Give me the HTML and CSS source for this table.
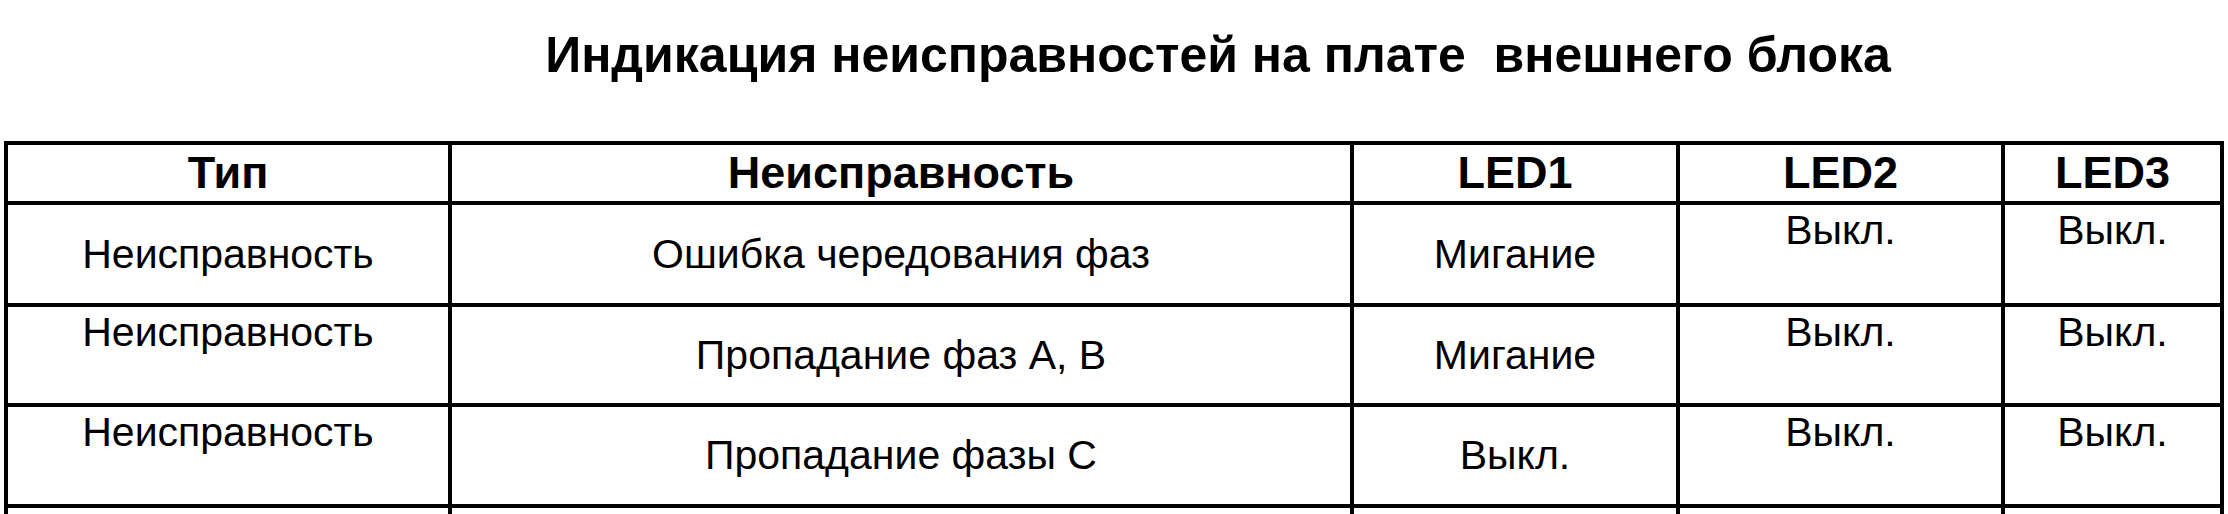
FILE: index.html
```html
<!DOCTYPE html>
<html lang="ru">
<head>
<meta charset="utf-8">
<title>Индикация неисправностей</title>
<link rel="stylesheet" href="styles.css">
</head>
<body>
<h1 class="title">Индикация неисправностей на плате&nbsp; внешнего блока</h1>
<table class="faults">
  <colgroup>
    <col class="col-type">
    <col class="col-fault">
    <col class="col-led1">
    <col class="col-led2">
    <col class="col-led3">
  </colgroup>
  <thead>
    <tr class="head-row">
      <th>Тип</th>
      <th>Неисправность</th>
      <th>LED1</th>
      <th>LED2</th>
      <th>LED3</th>
    </tr>
  </thead>
  <tbody>
    <tr class="row-1">
      <td class="mid">Неисправность</td>
      <td class="mid">Ошибка чередования фаз</td>
      <td class="mid">Мигание</td>
      <td class="top">Выкл.</td>
      <td class="top">Выкл.</td>
    </tr>
    <tr class="row-2">
      <td class="top">Неисправность</td>
      <td class="mid">Пропадание фаз А, В</td>
      <td class="mid">Мигание</td>
      <td class="top">Выкл.</td>
      <td class="top">Выкл.</td>
    </tr>
    <tr class="row-3">
      <td class="top">Неисправность</td>
      <td class="mid">Пропадание фазы С</td>
      <td class="mid">Выкл.</td>
      <td class="top">Выкл.</td>
      <td class="top">Выкл.</td>
    </tr>
    <tr class="row-4">
      <td class="top"></td>
      <td class="mid"></td>
      <td class="mid"></td>
      <td class="top"></td>
      <td class="top"></td>
    </tr>
  </tbody>
</table>
</body>
</html>
```

FILE: styles.css
```css
html, body {
  margin: 0;
  padding: 0;
  background: #ffffff;
}

body {
  width: 2228px;
  font-family: "Liberation Sans", Arial, sans-serif;
  color: #000000;
}

.title {
  margin: 26px 0 0 0;
  padding-left: 208px;
  text-align: center;
  font-size: 50px;
  line-height: 58px;
  font-weight: bold;
  white-space: pre;
}

.faults {
  margin: 57px 0 0 4px;
  width: 2220px;
  border-collapse: collapse;
  table-layout: fixed;
}

.col-type { width: 444px; }
.col-fault { width: 902px; }
.col-led1 { width: 326px; }
.col-led2 { width: 325px; }
.col-led3 { width: 219px; }

.faults th,
.faults td {
  border: 4px solid #000000;
  padding: 0;
  text-align: center;
  line-height: normal;
}

.faults th {
  font-size: 45px;
  font-weight: bold;
  vertical-align: middle;
}

.faults td {
  font-size: 41px;
  font-weight: normal;
}

.head-row { height: 60px; }
.row-1 { height: 102px; }
.row-2 { height: 100px; }
.row-3 { height: 101px; }
.row-4 { height: 100px; }

.faults td.mid {
  vertical-align: middle;
}

.faults td.top {
  vertical-align: top;
  padding-top: 2px;
}
```
